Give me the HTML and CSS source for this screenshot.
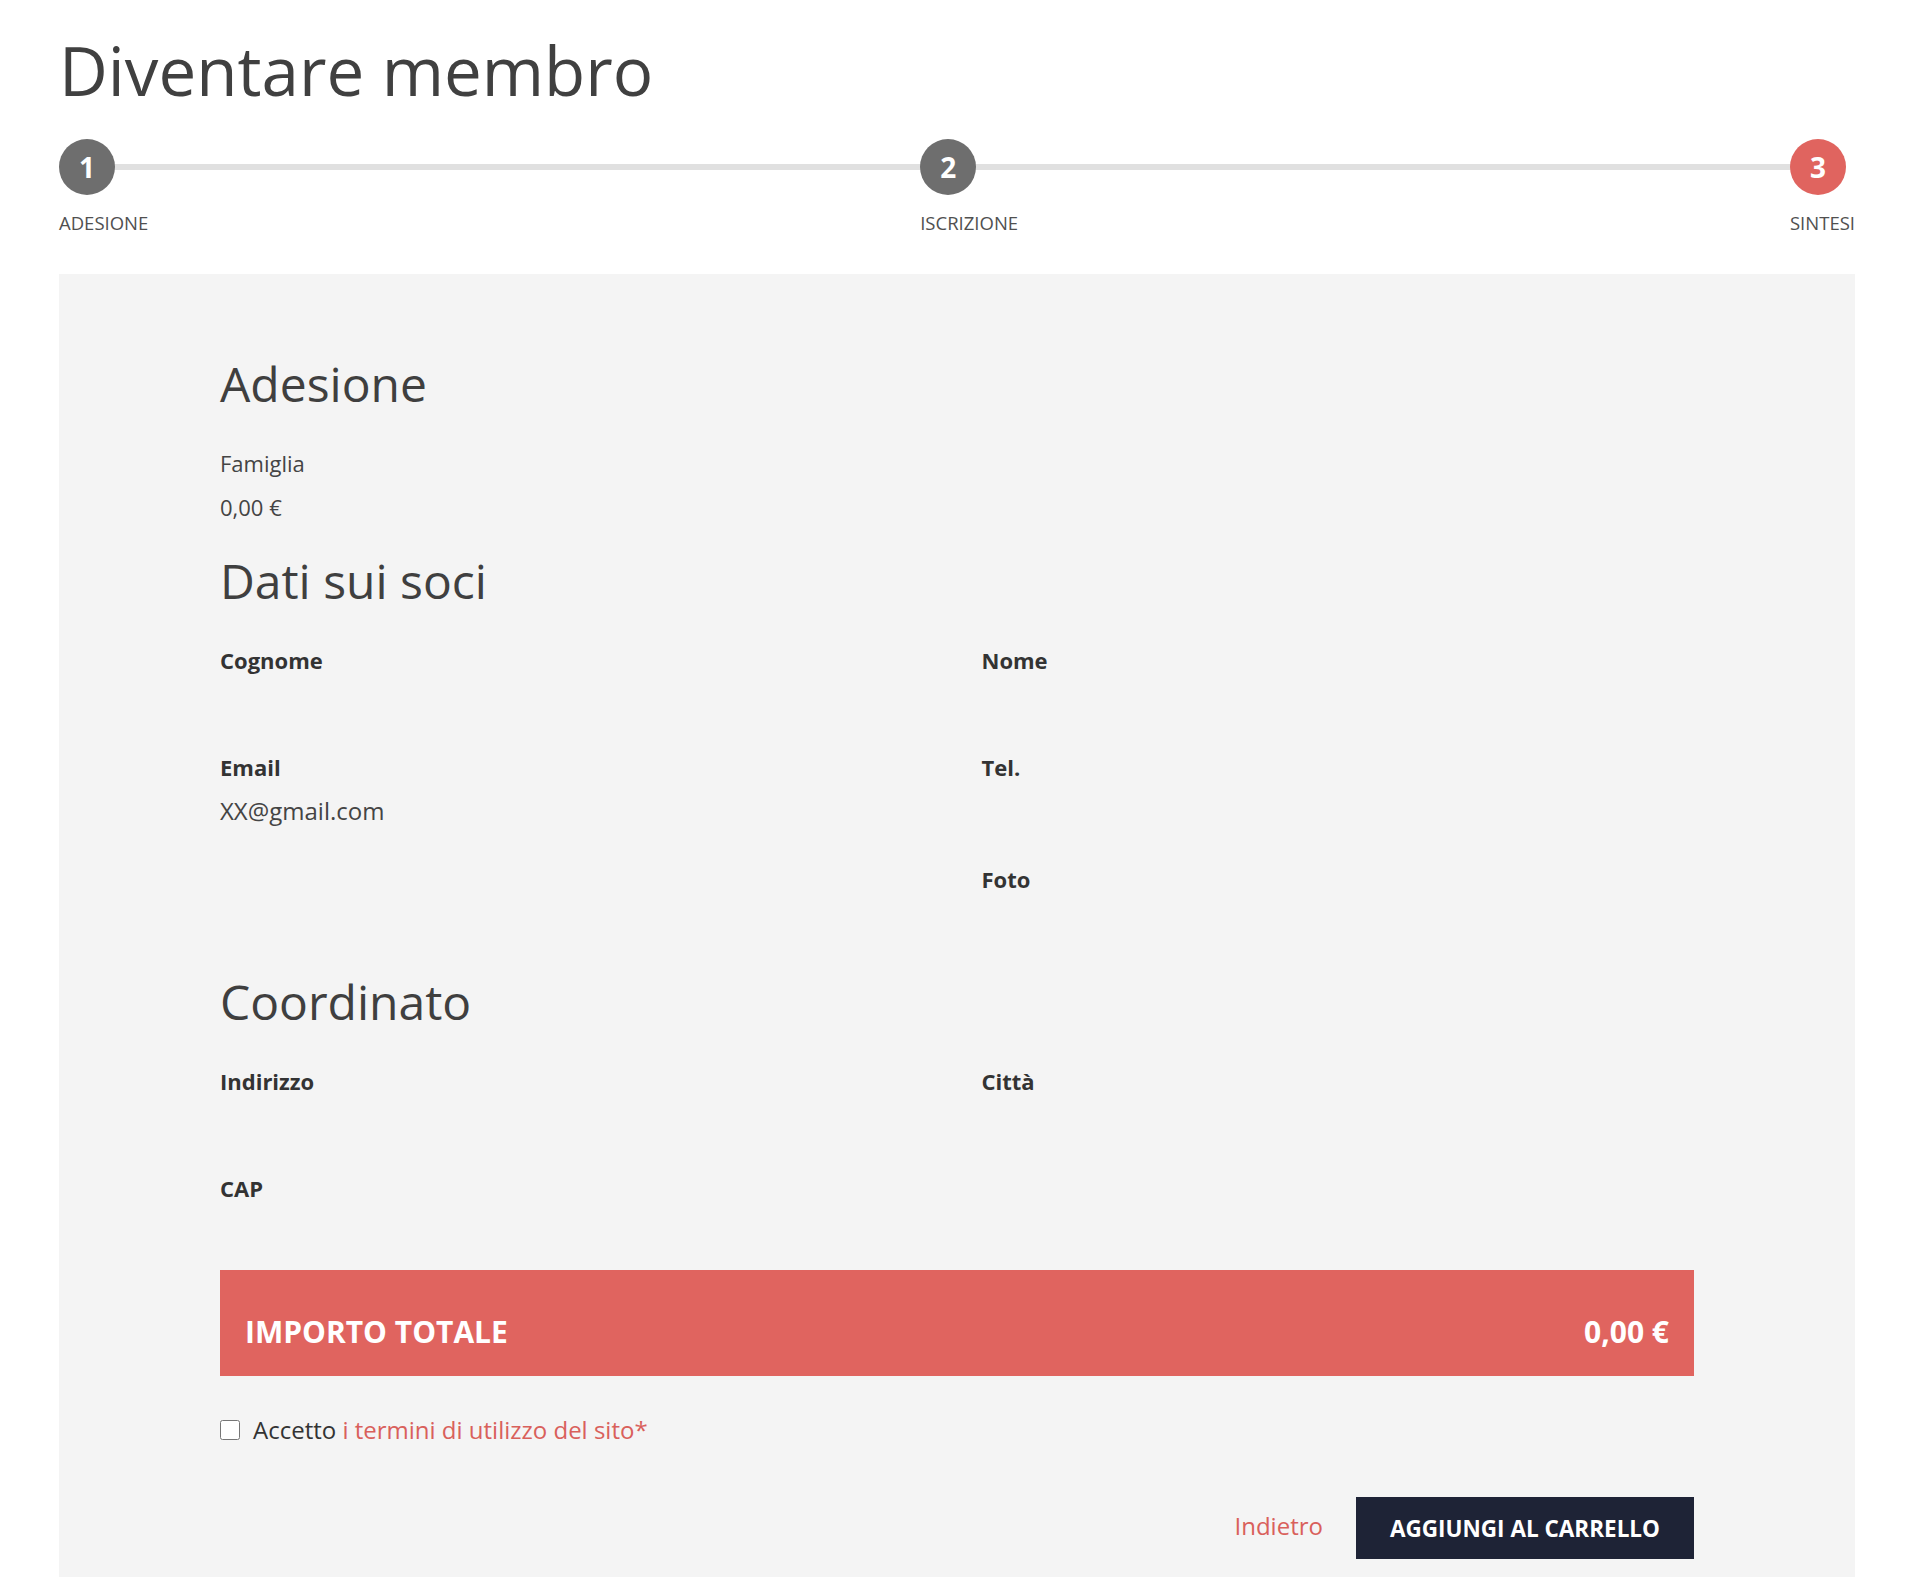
FILE: index.html
```html
<!DOCTYPE html>
<html lang="it">
<head>
<meta charset="utf-8">
<title>Diventare membro</title>
<link rel="stylesheet" href="styles.css">
</head>
<body>
<div class="page">
  <h1 class="page-title">Diventare membro</h1>

  <div class="stepper">
    <div class="step">
      <span class="step-num">1</span>
      <span class="step-label">ADESIONE</span>
    </div>
    <div class="step">
      <span class="step-num">2</span>
      <span class="step-label">ISCRIZIONE</span>
    </div>
    <div class="step step-active">
      <span class="step-num">3</span>
      <span class="step-label">SINTESI</span>
    </div>
  </div>

  <div class="panel">
    <h2 class="section-title first">Adesione</h2>
    <p class="text">Famiglia</p>
    <p class="text">0,00 €</p>

    <h2 class="section-title">Dati sui soci</h2>
    <div class="fields">
      <div class="field"><div class="field-label">Cognome</div><div class="field-value"></div></div>
      <div class="field"><div class="field-label">Nome</div><div class="field-value"></div></div>
      <div class="field"><div class="field-label">Email</div><div class="field-value">XX@gmail.com</div></div>
      <div class="field"><div class="field-label">Tel.</div><div class="field-value"></div></div>
      <div class="field field-empty"></div>
      <div class="field"><div class="field-label">Foto</div><div class="field-value"></div></div>
    </div>

    <h2 class="section-title after-fields">Coordinato</h2>
    <div class="fields">
      <div class="field"><div class="field-label">Indirizzo</div><div class="field-value"></div></div>
      <div class="field"><div class="field-label">Città</div><div class="field-value"></div></div>
      <div class="field"><div class="field-label">CAP</div><div class="field-value"></div></div>
    </div>

    <div class="total-bar">
      <span class="total-label">IMPORTO TOTALE</span>
      <span class="total-amount">0,00 €</span>
    </div>

    <label class="terms">
      <input type="checkbox" class="terms-check">
      <span>Accetto <a href="#" class="terms-link">i termini di utilizzo del sito*</a></span>
    </label>

    <div class="actions">
      <a href="#" class="back-link">Indietro</a>
      <button type="button" class="cart-btn">AGGIUNGI AL CARRELLO</button>
    </div>
  </div>
</div>
</body>
</html>
```

FILE: styles.css
```css
html, body {
  margin: 0;
  padding: 0;
  background: #ffffff;
}

body {
  font-family: "Open Sans", "Noto Sans", sans-serif;
  color: #444444;
}

.page {
  padding: 0 66px 0 59px;
}

.page-title {
  margin: 30px 0 0;
  font-size: 67.3px;
  line-height: 80px;
  font-weight: 400;
  color: #404040;
}

/* Stepper */
.stepper {
  position: relative;
  display: flex;
  justify-content: space-between;
  margin-top: 29px;
}

.stepper::before {
  content: "";
  position: absolute;
  left: 28px;
  right: 38px;
  top: 25px;
  height: 6px;
  background: #e0e0e0;
}

.step {
  position: relative;
  z-index: 1;
  display: flex;
  flex-direction: column;
  align-items: flex-start;
}

.step-num {
  width: 56px;
  height: 56px;
  border-radius: 50%;
  background: #6e6e6e;
  color: #ffffff;
  font-weight: 700;
  font-size: 28px;
  display: flex;
  align-items: center;
  justify-content: center;
}

.step-active .step-num {
  background: #e0645f;
}

.step-label {
  margin-top: 16px;
  font-size: 18.5px;
  line-height: 24px;
  color: #505050;
}

/* Panel */
.panel {
  margin-top: 39px;
  background: #f4f4f4;
  padding: 81px 161px 80px;
}

.section-title {
  margin: 23px 0 28px;
  font-size: 48px;
  line-height: 58px;
  font-weight: 400;
  color: #3f3f3f;
}

.section-title.first {
  margin-top: 0;
}

.section-title.after-fields {
  margin-top: 9px;
}

.text {
  margin: 0;
  font-size: 22px;
  line-height: 44px;
  color: #444444;
}

.fields {
  display: grid;
  grid-template-columns: 1fr 1fr;
  column-gap: 49px;
}

.field {
  margin-bottom: 24px;
}

.field-label {
  font-size: 22px;
  line-height: 44px;
  font-weight: 700;
  color: #333333;
}

.field-value {
  min-height: 39px;
  font-size: 24px;
  line-height: 44px;
  color: #444444;
}

/* Total */
.total-bar {
  box-sizing: border-box;
  height: 106px;
  margin-top: -3px;
  padding: 16px 25px 0;
  background: #e0645f;
  color: #ffffff;
  display: flex;
  align-items: center;
  justify-content: space-between;
  font-weight: 700;
  font-size: 30px;
}

.terms {
  display: flex;
  align-items: center;
  margin-top: 36px;
  font-size: 24px;
  line-height: 36px;
  color: #333333;
}

.terms-check {
  width: 20px;
  height: 20px;
  margin: 0 13px 0 0;
}

.terms-link {
  color: #d9605b;
  text-decoration: none;
}

.actions {
  display: flex;
  justify-content: flex-end;
  align-items: center;
  gap: 33px;
  margin-top: 49px;
}

.back-link {
  font-size: 24px;
  line-height: 30px;
  margin-top: -5px;
  color: #d9605b;
  text-decoration: none;
}

.cart-btn {
  height: 62px;
  padding: 0 34px;
  border: 0;
  border-radius: 0;
  background: #1e2336;
  color: #ffffff;
  font-family: "Open Sans", "Noto Sans", sans-serif;
  font-weight: 700;
  font-size: 22.5px;
  letter-spacing: 0;
}
```
